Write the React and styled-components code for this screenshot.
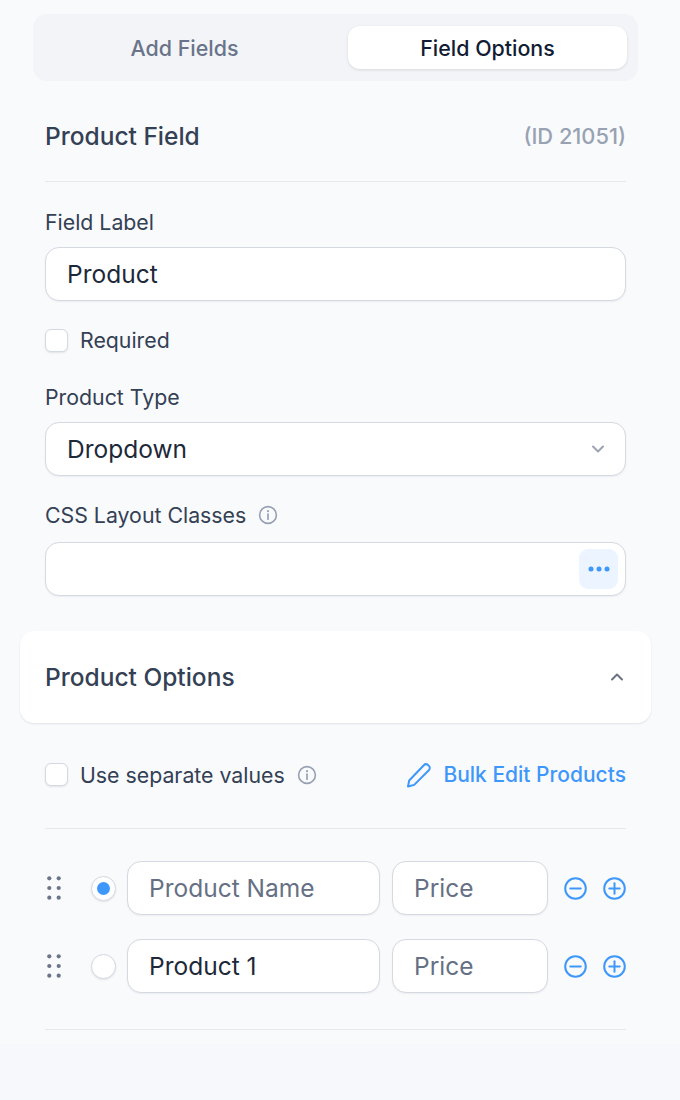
import React from 'react';
import styled, { createGlobalStyle } from 'styled-components';

const GlobalStyle = createGlobalStyle`
  html, body { margin: 0; padding: 0; background: #f7f8fc; }
  body { font-family: Inter, "Liberation Sans", sans-serif; }
  * { box-sizing: border-box; }
`;

function InfoIcon() {
  return (
    <Info viewBox="0 0 20 20" fill="none">
      <circle cx="10" cy="10" r="8.4" stroke="#98a1b3" strokeWidth="1.6" />
      <circle cx="10" cy="6.2" r="1.1" fill="#98a1b3" />
      <path d="M10 9.2v5" stroke="#98a1b3" strokeWidth="1.7" strokeLinecap="round" />
    </Info>
  );
}

function Chevron({ up, color }) {
  return (
    <svg width="14" height="10" viewBox="0 0 14 10" fill="none">
      <path d={up ? 'M2 7.5L7 2.5L12 7.5' : 'M2 2.5L7 7.5L12 2.5'} stroke={color} strokeWidth="2" strokeLinecap="round" strokeLinejoin="round" />
    </svg>
  );
}

function DragHandle() {
  return (
    <Handle width="16" height="26" viewBox="0 0 16 26" fill="#6b7489">
      {[3.3, 13, 22.7].map(y => (
        <g key={y}>
          <circle cx="4.3" cy={y} r="2.1" />
          <circle cx="13.7" cy={y} r="2.1" />
        </g>
      ))}
    </Handle>
  );
}

function RoundIcon({ plus }) {
  return (
    <svg width="23" height="23" viewBox="0 0 23 23" fill="none" stroke="#3e97fa" strokeWidth="2" strokeLinecap="round">
      <circle cx="11.5" cy="11.5" r="10.3" />
      <path d="M6.3 11.5h10.4" />
      {plus && <path d="M11.5 6.3v10.4" />}
    </svg>
  );
}

function ProductRow({ name, selected }) {
  return (
    <Row>
      <DragHandle />
      <Radio>{selected && <RadioDot />}</Radio>
      <NameBox $muted={!name}>{name || 'Product Name'}</NameBox>
      <PriceBox>Price</PriceBox>
      <RowActions>
        <RoundIcon />
        <RoundIcon plus />
      </RowActions>
    </Row>
  );
}

export default function App() {
  return (
    <>
      <GlobalStyle />
      <Panel>
        <Tabs>
          <Tab>Add Fields</Tab>
          <Tab $active>Field Options</Tab>
        </Tabs>
        <Content>
          <TitleRow>
            <Title>Product Field</Title>
            <FieldId>(ID 21051)</FieldId>
          </TitleRow>
          <Divider />
          <Label>Field Label</Label>
          <Input>Product</Input>
          <CheckRow>
            <Checkbox />
            <CheckText>Required</CheckText>
          </CheckRow>
          <Label>Product Type</Label>
          <Input>
            Dropdown
            <Chevron color="#9ca3b4" />
          </Input>
          <Label $withIcon>
            CSS Layout Classes
            <InfoIcon />
          </Label>
          <Input $tight>
            <span />
            <MoreButton>
              <svg width="24" height="6" viewBox="0 0 24 6" fill="#3e97fa">
                <circle cx="4" cy="3" r="2.5" />
                <circle cx="12" cy="3" r="2.5" />
                <circle cx="20" cy="3" r="2.5" />
              </svg>
            </MoreButton>
          </Input>
        </Content>
        <Section>
          <Title>Product Options</Title>
          <Chevron up color="#6b7280" />
        </Section>
        <Content>
          <OptionsBar>
            <CheckRow $flush>
              <Checkbox />
              <CheckText>Use separate values</CheckText>
              <InfoIcon />
            </CheckRow>
            <BulkEdit>
              <svg width="26" height="26" viewBox="0 0 26 26" fill="none" stroke="#3e97fa" strokeWidth="2" strokeLinejoin="round">
                <path d="M2 24.5l1.2-6L17.8 3.2c1.2-1.3 3-1.3 4.3-.1l.8.8c1.2 1.2 1.2 3-.1 4.3L8.2 22.9l-6.2 1.6z" />
              </svg>
              Bulk Edit Products
            </BulkEdit>
          </OptionsBar>
          <Divider />
          <Rows>
            <ProductRow selected />
            <ProductRow name="Product 1" />
          </Rows>
          <Divider />
        </Content>
      </Panel>
    </>
  );
}

const Panel = styled.div`
  width: 680px;
  height: 1044px;
  padding-top: 14px;
  background: #f9fafc;
  overflow: hidden;
`;

const Tabs = styled.div`
  display: flex;
  justify-content: space-between;
  width: 605px;
  height: 67px;
  margin-left: 33px;
  padding: 12px 11px;
  background: #f3f4f7;
  border-radius: 14px;
`;

const Tab = styled.div`
  display: flex;
  align-items: center;
  justify-content: center;
  width: 279px;
  height: 43px;
  padding-left: ${props => (props.$active ? '0' : '2px')};
  font-size: 21.4px;
  font-weight: 500;
  color: ${props => (props.$active ? '#111c33' : '#69748a')};
  background: ${props => (props.$active ? '#fff' : 'transparent')};
  border-radius: 12px;
  box-shadow: ${props => (props.$active ? '0 1px 3px rgba(16, 24, 40, 0.12)' : 'none')};
`;

const Content = styled.div`
  padding: 0 54px 0 45px;
`;

const TitleRow = styled.div`
  display: flex;
  align-items: center;
  justify-content: space-between;
  height: 100px;
  padding-top: 9px;
`;

const Title = styled.div`
  font-size: 24.5px;
  font-weight: 500;
  color: #344054;
`;

const FieldId = styled.div`
  font-size: 21.8px;
  font-weight: 500;
  color: #98a2b3;
`;

const Divider = styled.div`
  height: 1px;
  background: #e6e8ec;
`;

const Label = styled.div`
  display: flex;
  align-items: center;
  gap: ${props => (props.$withIcon ? '12px' : '0')};
  height: 29px;
  padding-bottom: 2px;
  margin: ${props => (props.$withIcon ? '25px 0 12px' : '26px 0 10px')};
  font-size: 21.3px;
  color: #344054;
`;

const Input = styled.div`
  display: flex;
  align-items: center;
  justify-content: space-between;
  height: 54px;
  padding: 0 ${props => (props.$tight ? '7px' : '20px')} 0 21px;
  font-size: 24.5px;
  color: #1d2939;
  background: #fff;
  border: 1px solid #d5d9e2;
  border-radius: 14px;
  box-shadow: 0 1px 2px rgba(16, 24, 40, 0.06);
`;

const CheckRow = styled.div`
  display: flex;
  align-items: center;
  height: 26px;
  margin: ${props => (props.$flush ? '0' : '26px 0 30px')};
`;

const Checkbox = styled.div`
  width: 23px;
  height: 23px;
  margin-right: 12px;
  background: #fff;
  border: 1px solid #d5d9e2;
  border-radius: 6px;
  box-shadow: 0 1px 2px rgba(16, 24, 40, 0.1);
`;

const CheckText = styled.span`
  font-size: 21.3px;
  color: #344054;
`;

const Info = styled.svg`
  width: 20px;
  height: 20px;
  flex: none;

  span + & {
    margin-left: 12px;
  }
`;

const MoreButton = styled.div`
  display: flex;
  align-items: center;
  justify-content: center;
  width: 39px;
  height: 40px;
  background: #ebf4ff;
  border-radius: 9px;
`;

const Section = styled.div`
  display: flex;
  align-items: center;
  justify-content: space-between;
  width: 631px;
  height: 92px;
  margin: 35px 0 0 20px;
  padding: 0 27px 0 25px;
  background: #fff;
  border-radius: 14px;
  box-shadow: 0 1px 2px rgba(16, 24, 40, 0.1);
`;

const OptionsBar = styled.div`
  display: flex;
  align-items: center;
  justify-content: space-between;
  height: 105px;
  padding-bottom: 2px;
`;

const BulkEdit = styled.div`
  display: flex;
  align-items: center;
  gap: 11px;
  font-size: 21px;
  font-weight: 500;
  color: #3e97fa;
`;

const Rows = styled.div`
  display: flex;
  flex-direction: column;
  gap: 24px;
  padding: 32px 0 36px;
`;

const Row = styled.div`
  display: flex;
  align-items: center;
`;

const Handle = styled.svg`
  flex: none;
`;

const Radio = styled.div`
  display: flex;
  flex: none;
  align-items: center;
  justify-content: center;
  width: 25px;
  height: 25px;
  margin: 0 11px 0 30px;
  background: #fff;
  border: 1px solid #d5d9e2;
  border-radius: 50%;
  box-shadow: 0 1px 2px rgba(16, 24, 40, 0.1);
`;

const RadioDot = styled.div`
  width: 13px;
  height: 13px;
  background: #3e97fa;
  border-radius: 50%;
`;

const NameBox = styled.div`
  display: flex;
  flex: none;
  align-items: center;
  width: 253px;
  height: 54px;
  padding-left: 21px;
  font-size: 24.5px;
  color: ${props => (props.$muted ? '#667085' : '#1d2939')};
  background: #fff;
  border: 1px solid #d5d9e2;
  border-radius: 14px;
  box-shadow: 0 1px 2px rgba(16, 24, 40, 0.06);
`;

const PriceBox = styled(NameBox)`
  width: 156px;
  margin-left: 12px;
  color: #667085;
`;

const RowActions = styled.div`
  display: flex;
  flex: none;
  gap: 16px;
  margin-left: 16px;
`;
